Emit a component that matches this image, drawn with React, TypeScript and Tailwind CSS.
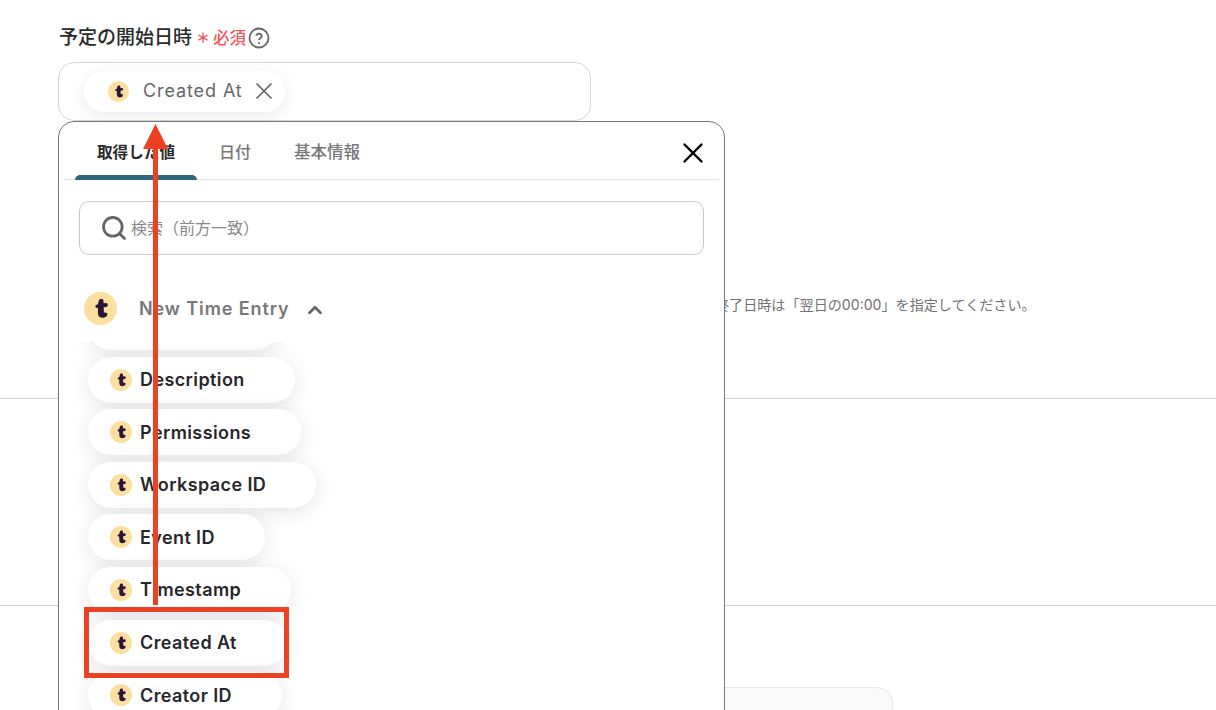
import { ChevronUp, Search, X } from 'lucide-react'

const fields = ['Description', 'Permissions', 'Workspace ID', 'Event ID', 'Timestamp', 'Created At', 'Creator ID']

function TogglIcon({ className }: { className: string }) {
  return (
    <svg viewBox="0 0 32 32" className={className}>
      <circle cx="16" cy="16" r="16" fill="#fbdf9e" />
      <path
        d="M14.500 7.800c.8-1.400 4-1.600 4.300.2l.2 2.900 2.500-.2c2 0 2 3.600.1 3.800l-2.500.3.200 4.400c.1 1.600 2.700.2 3.300 1.600.5 1.700-.8 3.600-3.400 4.100-3.200.5-5.500-1-5.600-3.900l-.2-5.700-1.200.1c-1.500-.1-1.500-2.800-.1-3.100l1.300-.3z"
        fill="#2c1338"
      />
    </svg>
  )
}

function FieldPill({ label }: { label: string }) {
  return (
    <div className="flex h-[46px] w-fit shrink-0 items-center gap-2 rounded-full bg-white pl-[22px] pr-[50px] shadow-[0_4px_22px_rgba(0,0,0,0.11)]">
      <TogglIcon className="size-[22px] shrink-0" />
      <span className="text-[18px] font-semibold tracking-[0.4px] text-[#27272a]">{label}</span>
    </div>
  )
}

function ValuePopup() {
  return (
    <div className="absolute left-[58px] top-[121px] h-[640px] w-[667px] rounded-2xl border border-[#777] bg-white">
      <div className="relative mx-[5px] flex h-[58px] border-b border-[#e2e2e2] pl-[11px]">
        <div className="flex h-[58px] items-center px-[22px] pt-[3px] text-[15.600px] font-semibold text-[#2a2a2a]">取得した値</div>
        <div className="flex h-[58px] items-center px-[22px] pt-[2px] text-[16px] font-medium text-[#777]">日付</div>
        <div className="flex h-[58px] items-center px-[21px] pt-[3px] text-[16.500px] font-medium text-[#777]">基本情報</div>
        <div className="absolute bottom-[-1px] left-[11px] h-[5px] w-[122px] rounded-t-md bg-[#2d6880]" />
        <X className="absolute right-[9px] top-[14px] size-[34px] text-black" strokeWidth={1.7} />
      </div>
      <div className="mx-5 mt-[21px] flex h-[54px] items-center gap-[3px] rounded-[10px] border border-[#c8c8c8] pl-[20px]">
        <Search className="size-[28px] text-[#666]" strokeWidth={2.4} />
        <span className="text-[16px] text-[#888]">検索（前方一致）</span>
      </div>
      <div className="ml-[25px] mt-[37px] flex h-[33px] items-center">
        <TogglIcon className="size-[33px]" />
        <span className="ml-[22px] text-[18px] font-semibold tracking-[0.9px] text-[#777]">New Time Entry</span>
        <ChevronUp className="ml-[14px] mt-[2px] size-[22px] text-[#666]" strokeWidth={3} />
      </div>
      <div className="mt-[17px] h-[400px] overflow-hidden">
        <div className="-mt-[38px] ml-[29px] flex flex-col gap-[6.600px]">
          <div className="h-[46px] w-[190px] shrink-0 rounded-full bg-white shadow-[0_4px_22px_rgba(0,0,0,0.11)]" />
          {fields.map(label => (
            <FieldPill key={label} label={label} />
          ))}
        </div>
      </div>
    </div>
  )
}

export default function App() {
  return (
    <div className="relative h-[710px] w-[1216px] overflow-hidden bg-white pt-[25px] font-['Inter','Noto_Sans_CJK_JP',sans-serif]">
      <div className="pl-[59px]">
        <div className="flex h-[24px] items-center">
          <span className="mt-[3px] text-[19px] font-medium text-[#2a2a2a]">予定の開始日時</span>
          <span className="ml-[4px] mt-[2px] text-[14px] font-bold leading-none text-[#f0565d]">＊</span>
          <span className="ml-[3px] mt-[2px] text-[16.500px] font-medium text-[#f0565d]">必須</span>
          <svg viewBox="0 0 22 22" className="ml-[2px] mt-[2px] size-[22px] text-[#666]" fill="none" stroke="currentColor">
            <circle cx="11" cy="11" r="9.500" strokeWidth="1.800" />
            <path d="M8.200 8.700a2.800 2.800 0 0 1 5.500.5c0 1.900-2.700 2.100-2.700 3.900" strokeWidth="1.800" />
            <circle cx="11" cy="16" r="1.100" fill="currentColor" stroke="none" />
          </svg>
        </div>
        <div className="-ml-px mt-[13px] flex h-[59px] w-[533px] items-center rounded-2xl border border-[#d3d6db] pb-[1px] pl-[25px]">
          <div className="flex h-[41px] w-[201px] items-center rounded-full bg-white pl-[24px] shadow-[0_4px_18px_rgba(0,0,0,0.09)]">
            <TogglIcon className="size-[21px] shrink-0" />
            <span className="ml-[14px] -mt-[2px] text-[18px] tracking-[0.9px] text-[#666]">Created At</span>
            <X className="ml-[7px] size-[28px] text-[#666]" strokeWidth={1.5} />
          </div>
        </div>
        <p className="ml-[656px] mt-[174px] text-[14.100px] leading-[20px] text-[#727272]">
          終了日時は「翌日の00:00」を指定してください。
        </p>
      </div>
      <div className="mt-[83px] h-px bg-[#d3d6db]" />
      <div className="mt-[206px] h-px bg-[#cfcfcf]" />
      <div className="ml-[500px] mt-[81px] h-[60px] w-[393px] rounded-2xl border border-[#e6e6e6] bg-[#f9f9f9]" />

      <ValuePopup />

      {/* annotation: arrow + highlight box */}
      <svg className="absolute left-[140px] top-[120px]" width="32" height="490" viewBox="0 0 32 490">
        <path d="M15.500 4L28 29H18v456h-5V29H3z" fill="#ee4123" />
      </svg>
      <div className="absolute left-[84px] top-[607px] h-[71px] w-[205px] border-[5px] border-[#ee4123]" />
    </div>
  )
}
